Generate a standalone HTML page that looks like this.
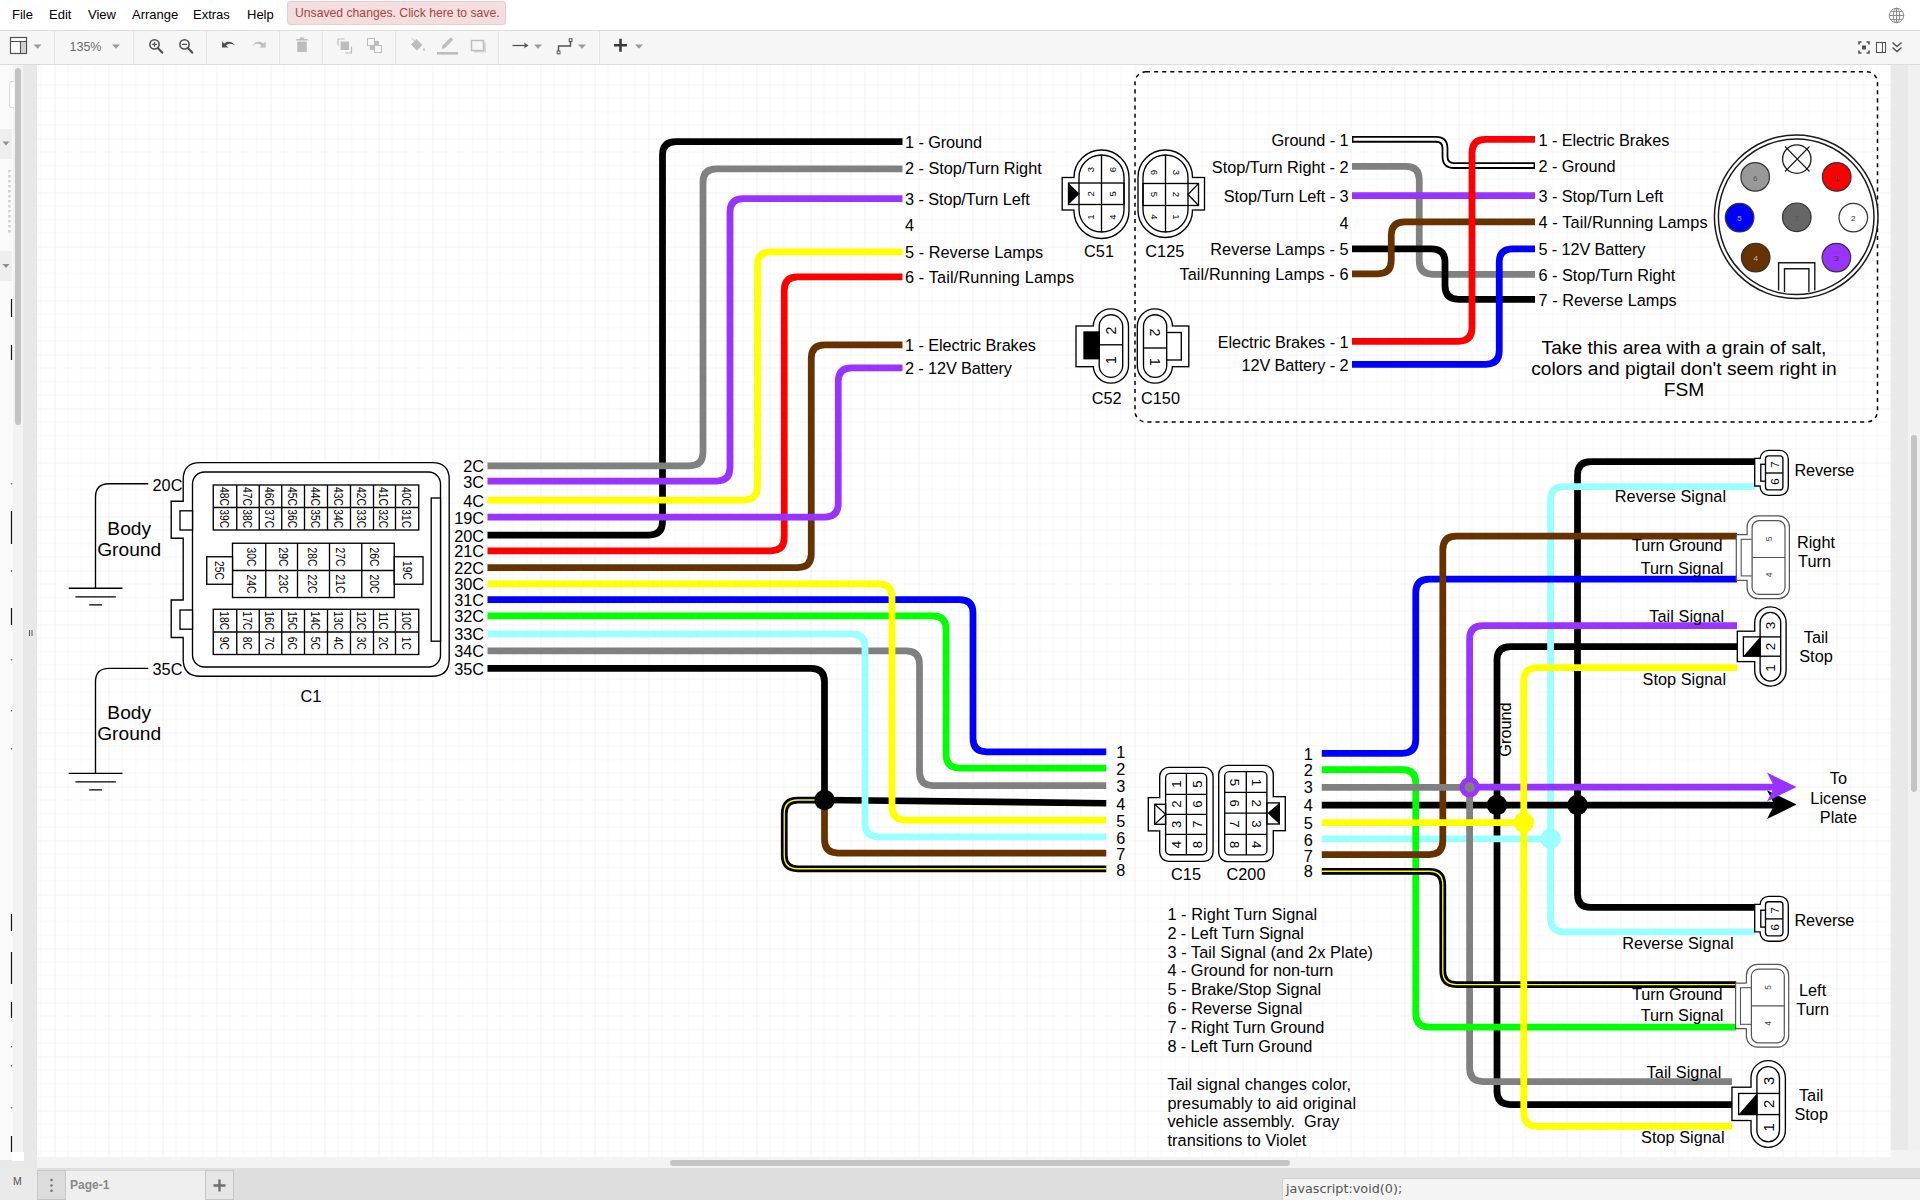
<!DOCTYPE html>
<html lang="en">
<head>
<meta charset="utf-8">
<title>Wiring diagram</title>
<style>
html,body{margin:0;padding:0;}
body{width:1920px;height:1200px;overflow:hidden;background:#fff;position:relative;font-family:"Liberation Sans",Arial,Helvetica,sans-serif;}
#dia{position:absolute;left:0;top:0;width:1920px;height:1200px;}
#dia text{font-family:"Liberation Sans",Arial,Helvetica,sans-serif;fill:#000;}
.abs{position:absolute;}
#menubar{left:0;top:0;width:1920px;height:30px;background:#fff;}
#menubar span.m{position:absolute;top:7px;font-size:13px;color:#000;line-height:15px;}
#unsaved{left:287px;top:1px;width:219px;height:24px;background:#f2dede;border:1px solid #ebccd1;border-radius:3px;box-sizing:border-box;color:#a94442;font-size:12.2px;line-height:23px;padding-left:7px;white-space:nowrap;}
#toolbar{left:0;top:30px;width:1920px;height:35px;background:#f6f6f6;border-top:1px solid #dcdcdc;border-bottom:1px solid #dcdcdc;box-sizing:border-box;}
.sep{position:absolute;top:31px;width:1px;height:33px;background:#e4e4e4;}
#leftbar{left:0;top:65px;width:37px;height:1103px;background:#e8e8e8;}
#rightbar{left:1891px;top:65px;width:29px;height:1103px;background:#e9e9e9;}
#hscroll{left:37px;top:1157px;width:1854px;height:11px;background:#f3f3f3;}
#footer{left:0;top:1168px;width:1920px;height:32px;background:#dedede;}
</style>
</head>
<body>
<svg id="dia" width="1920" height="1200" viewBox="0 0 1920 1200">
<defs>
<pattern id="grid" x="0.5" y="30.5" width="54" height="54" patternUnits="userSpaceOnUse">
<path d="M13.5 0V54M27 0V54M40.5 0V54M0 13.5H54M0 27H54M0 40.5H54" stroke="#f7f7f7" stroke-width="1" fill="none"/>
<path d="M0 0V54M0 0H54" stroke="#e7e7e7" stroke-width="1" fill="none"/>
</pattern>
</defs>
<rect x="0" y="0" width="1920" height="1200" fill="#ffffff"/>
<rect x="37" y="65" width="1854" height="1093" fill="url(#grid)"/>

<g id="c1">
<path d="M200.2 462.6 H432.2 Q449.2 462.6 449.2 479.6 V659.2 Q449.2 676.2 432.2 676.2 H200.2 Q183.2 676.2 183.2 659.2 V637.5 H171.2 V600 H183.2 V538.2 H171.2 V501.2 H183.2 V479.6 Q183.2 462.6 200.2 462.6 Z" fill="#fff" stroke="#000" stroke-width="1.35"/>
<rect x="192.5" y="472" width="248" height="195" rx="12" fill="#fff" stroke="#000" stroke-width="1.35" />
<rect x="180" y="510.8" width="12.5" height="19.2" rx="0" fill="#fff" stroke="#000" stroke-width="1.35" />
<rect x="180" y="610" width="12.5" height="19.2" rx="0" fill="#fff" stroke="#000" stroke-width="1.35" />
<rect x="431.2" y="498" width="9.3" height="143.2" rx="0" fill="#fff" stroke="#000" stroke-width="1.35" />
<rect x="213.25" y="485" width="205.5" height="45" rx="0" fill="#fff" stroke="#000" stroke-width="1.35" />
<line x1="213.25" y1="507.5" x2="418.75" y2="507.5" stroke="#000" stroke-width="1.35"/>
<line x1="236.75" y1="485" x2="236.75" y2="530" stroke="#000" stroke-width="1.35"/>
<line x1="259.25" y1="485" x2="259.25" y2="530" stroke="#000" stroke-width="1.35"/>
<line x1="281.75" y1="485" x2="281.75" y2="530" stroke="#000" stroke-width="1.35"/>
<line x1="304.5" y1="485" x2="304.5" y2="530" stroke="#000" stroke-width="1.35"/>
<line x1="327.5" y1="485" x2="327.5" y2="530" stroke="#000" stroke-width="1.35"/>
<line x1="350.5" y1="485" x2="350.5" y2="530" stroke="#000" stroke-width="1.35"/>
<line x1="373.5" y1="485" x2="373.5" y2="530" stroke="#000" stroke-width="1.35"/>
<line x1="395.5" y1="485" x2="395.5" y2="530" stroke="#000" stroke-width="1.35"/>
<rect x="213.25" y="609.25" width="205.5" height="45.25" rx="0" fill="#fff" stroke="#000" stroke-width="1.35" />
<line x1="213.25" y1="632" x2="418.75" y2="632" stroke="#000" stroke-width="1.35"/>
<line x1="236.75" y1="609.25" x2="236.75" y2="654.5" stroke="#000" stroke-width="1.35"/>
<line x1="259.25" y1="609.25" x2="259.25" y2="654.5" stroke="#000" stroke-width="1.35"/>
<line x1="281.75" y1="609.25" x2="281.75" y2="654.5" stroke="#000" stroke-width="1.35"/>
<line x1="304.5" y1="609.25" x2="304.5" y2="654.5" stroke="#000" stroke-width="1.35"/>
<line x1="327.5" y1="609.25" x2="327.5" y2="654.5" stroke="#000" stroke-width="1.35"/>
<line x1="350.5" y1="609.25" x2="350.5" y2="654.5" stroke="#000" stroke-width="1.35"/>
<line x1="373.5" y1="609.25" x2="373.5" y2="654.5" stroke="#000" stroke-width="1.35"/>
<line x1="395.5" y1="609.25" x2="395.5" y2="654.5" stroke="#000" stroke-width="1.35"/>
<rect x="232.5" y="543.25" width="161.75" height="54.25" rx="0" fill="#fff" stroke="#000" stroke-width="1.35" />
<line x1="232.5" y1="570.5" x2="394.25" y2="570.5" stroke="#000" stroke-width="1.35"/>
<line x1="265.75" y1="543.25" x2="265.75" y2="597.5" stroke="#000" stroke-width="1.35"/>
<line x1="297.5" y1="543.25" x2="297.5" y2="597.5" stroke="#000" stroke-width="1.35"/>
<line x1="329.5" y1="543.25" x2="329.5" y2="597.5" stroke="#000" stroke-width="1.35"/>
<line x1="361.75" y1="543.25" x2="361.75" y2="597.5" stroke="#000" stroke-width="1.35"/>
<rect x="206.75" y="556.75" width="25.75" height="27.5" rx="0" fill="#fff" stroke="#000" stroke-width="1.35" />
<rect x="394.25" y="556.75" width="28.75" height="27.5" rx="0" fill="#fff" stroke="#000" stroke-width="1.35" />
<text transform="translate(224.5 496.4) rotate(90) scale(1 1.28)" x="0" y="3.71" font-size="10.3" text-anchor="middle" >48C</text>
<text transform="translate(224.5 518.8) rotate(90) scale(1 1.28)" x="0" y="3.71" font-size="10.3" text-anchor="middle" >39C</text>
<text transform="translate(224.5 620.7) rotate(90) scale(1 1.28)" x="0" y="3.71" font-size="10.3" text-anchor="middle" >18C</text>
<text transform="translate(224.5 643.3) rotate(90) scale(1 1.28)" x="0" y="3.71" font-size="10.3" text-anchor="middle" >9C</text>
<text transform="translate(247.5 496.4) rotate(90) scale(1 1.28)" x="0" y="3.71" font-size="10.3" text-anchor="middle" >47C</text>
<text transform="translate(247.5 518.8) rotate(90) scale(1 1.28)" x="0" y="3.71" font-size="10.3" text-anchor="middle" >38C</text>
<text transform="translate(247.5 620.7) rotate(90) scale(1 1.28)" x="0" y="3.71" font-size="10.3" text-anchor="middle" >17C</text>
<text transform="translate(247.5 643.3) rotate(90) scale(1 1.28)" x="0" y="3.71" font-size="10.3" text-anchor="middle" >8C</text>
<text transform="translate(270 496.4) rotate(90) scale(1 1.28)" x="0" y="3.71" font-size="10.3" text-anchor="middle" >46C</text>
<text transform="translate(270 518.8) rotate(90) scale(1 1.28)" x="0" y="3.71" font-size="10.3" text-anchor="middle" >37C</text>
<text transform="translate(270 620.7) rotate(90) scale(1 1.28)" x="0" y="3.71" font-size="10.3" text-anchor="middle" >16C</text>
<text transform="translate(270 643.3) rotate(90) scale(1 1.28)" x="0" y="3.71" font-size="10.3" text-anchor="middle" >7C</text>
<text transform="translate(292.62 496.4) rotate(90) scale(1 1.28)" x="0" y="3.71" font-size="10.3" text-anchor="middle" >45C</text>
<text transform="translate(292.62 518.8) rotate(90) scale(1 1.28)" x="0" y="3.71" font-size="10.3" text-anchor="middle" >36C</text>
<text transform="translate(292.62 620.7) rotate(90) scale(1 1.28)" x="0" y="3.71" font-size="10.3" text-anchor="middle" >15C</text>
<text transform="translate(292.62 643.3) rotate(90) scale(1 1.28)" x="0" y="3.71" font-size="10.3" text-anchor="middle" >6C</text>
<text transform="translate(315.5 496.4) rotate(90) scale(1 1.28)" x="0" y="3.71" font-size="10.3" text-anchor="middle" >44C</text>
<text transform="translate(315.5 518.8) rotate(90) scale(1 1.28)" x="0" y="3.71" font-size="10.3" text-anchor="middle" >35C</text>
<text transform="translate(315.5 620.7) rotate(90) scale(1 1.28)" x="0" y="3.71" font-size="10.3" text-anchor="middle" >14C</text>
<text transform="translate(315.5 643.3) rotate(90) scale(1 1.28)" x="0" y="3.71" font-size="10.3" text-anchor="middle" >5C</text>
<text transform="translate(338.5 496.4) rotate(90) scale(1 1.28)" x="0" y="3.71" font-size="10.3" text-anchor="middle" >43C</text>
<text transform="translate(338.5 518.8) rotate(90) scale(1 1.28)" x="0" y="3.71" font-size="10.3" text-anchor="middle" >34C</text>
<text transform="translate(338.5 620.7) rotate(90) scale(1 1.28)" x="0" y="3.71" font-size="10.3" text-anchor="middle" >13C</text>
<text transform="translate(338.5 643.3) rotate(90) scale(1 1.28)" x="0" y="3.71" font-size="10.3" text-anchor="middle" >4C</text>
<text transform="translate(361.5 496.4) rotate(90) scale(1 1.28)" x="0" y="3.71" font-size="10.3" text-anchor="middle" >42C</text>
<text transform="translate(361.5 518.8) rotate(90) scale(1 1.28)" x="0" y="3.71" font-size="10.3" text-anchor="middle" >33C</text>
<text transform="translate(361.5 620.7) rotate(90) scale(1 1.28)" x="0" y="3.71" font-size="10.3" text-anchor="middle" >12C</text>
<text transform="translate(361.5 643.3) rotate(90) scale(1 1.28)" x="0" y="3.71" font-size="10.3" text-anchor="middle" >3C</text>
<text transform="translate(384 496.4) rotate(90) scale(1 1.28)" x="0" y="3.71" font-size="10.3" text-anchor="middle" >41C</text>
<text transform="translate(384 518.8) rotate(90) scale(1 1.28)" x="0" y="3.71" font-size="10.3" text-anchor="middle" >32C</text>
<text transform="translate(384 620.7) rotate(90) scale(1 1.28)" x="0" y="3.71" font-size="10.3" text-anchor="middle" >11C</text>
<text transform="translate(384 643.3) rotate(90) scale(1 1.28)" x="0" y="3.71" font-size="10.3" text-anchor="middle" >2C</text>
<text transform="translate(406.62 496.4) rotate(90) scale(1 1.28)" x="0" y="3.71" font-size="10.3" text-anchor="middle" >40C</text>
<text transform="translate(406.62 518.8) rotate(90) scale(1 1.28)" x="0" y="3.71" font-size="10.3" text-anchor="middle" >31C</text>
<text transform="translate(406.62 620.7) rotate(90) scale(1 1.28)" x="0" y="3.71" font-size="10.3" text-anchor="middle" >10C</text>
<text transform="translate(406.62 643.3) rotate(90) scale(1 1.28)" x="0" y="3.71" font-size="10.3" text-anchor="middle" >1C</text>
<text transform="translate(252.2 557) rotate(90) scale(1 1.28)" x="0" y="3.71" font-size="10.3" text-anchor="middle" >30C</text>
<text transform="translate(252.2 584) rotate(90) scale(1 1.28)" x="0" y="3.71" font-size="10.3" text-anchor="middle" >24C</text>
<text transform="translate(283.7 557) rotate(90) scale(1 1.28)" x="0" y="3.71" font-size="10.3" text-anchor="middle" >29C</text>
<text transform="translate(283.7 584) rotate(90) scale(1 1.28)" x="0" y="3.71" font-size="10.3" text-anchor="middle" >23C</text>
<text transform="translate(312.5 557) rotate(90) scale(1 1.28)" x="0" y="3.71" font-size="10.3" text-anchor="middle" >28C</text>
<text transform="translate(312.5 584) rotate(90) scale(1 1.28)" x="0" y="3.71" font-size="10.3" text-anchor="middle" >22C</text>
<text transform="translate(340.8 557) rotate(90) scale(1 1.28)" x="0" y="3.71" font-size="10.3" text-anchor="middle" >27C</text>
<text transform="translate(340.8 584) rotate(90) scale(1 1.28)" x="0" y="3.71" font-size="10.3" text-anchor="middle" >21C</text>
<text transform="translate(375 557) rotate(90) scale(1 1.28)" x="0" y="3.71" font-size="10.3" text-anchor="middle" >26C</text>
<text transform="translate(375 584) rotate(90) scale(1 1.28)" x="0" y="3.71" font-size="10.3" text-anchor="middle" >20C</text>
<text transform="translate(219.5 570.5) rotate(90) scale(1 1.28)" x="0" y="3.71" font-size="10.3" text-anchor="middle" >25C</text>
<text transform="translate(408 570.5) rotate(90) scale(1 1.28)" x="0" y="3.71" font-size="10.3" text-anchor="middle" >19C</text>
<text x="310.8" y="702.1" font-size="16.3" text-anchor="middle" >C1</text>
</g>
<g id="grounds" fill="none" stroke="#000" stroke-width="1.35">
<path d="M148.3 483.75 L109 483.75 Q95.5 483.75 95.5 497.25 L95.5 588.25"/>
<path d="M68.7 588.25 H122.5 M75.4 596.85 H115.8 M89.2 604.85 H101.9"/>
<path d="M148.3 668.3 L109 668.3 Q95.5 668.3 95.5 681.8 L95.5 773.3"/>
<path d="M68.7 773.3 H122.5 M75.4 781.9 H115.8 M89.2 789.9 H101.9"/>
</g>
<text x="182.4" y="490.8" font-size="16.3" text-anchor="end" >20C</text>
<text x="182.4" y="675" font-size="16.3" text-anchor="end" >35C</text>
<text x="129.2" y="534.5" font-size="19.2" text-anchor="middle" >Body</text>
<text x="129.2" y="555.5" font-size="19.2" text-anchor="middle" >Ground</text>
<text x="129.2" y="719.3" font-size="19.2" text-anchor="middle" >Body</text>
<text x="129.2" y="740.3" font-size="19.2" text-anchor="middle" >Ground</text>
<text x="484" y="472.35" font-size="16.3" text-anchor="end" >2C</text>
<text x="484" y="487.6" font-size="16.3" text-anchor="end" >3C</text>
<text x="484" y="506.6" font-size="16.3" text-anchor="end" >4C</text>
<text x="484" y="523.6" font-size="16.3" text-anchor="end" >19C</text>
<text x="484" y="541.6" font-size="16.3" text-anchor="end" >20C</text>
<text x="484" y="557.35" font-size="16.3" text-anchor="end" >21C</text>
<text x="484" y="574.1" font-size="16.3" text-anchor="end" >22C</text>
<text x="484" y="590.35" font-size="16.3" text-anchor="end" >30C</text>
<text x="484" y="606.1" font-size="16.3" text-anchor="end" >31C</text>
<text x="484" y="622.35" font-size="16.3" text-anchor="end" >32C</text>
<text x="484" y="640.35" font-size="16.3" text-anchor="end" >33C</text>
<text x="484" y="657.35" font-size="16.3" text-anchor="end" >34C</text>
<text x="484" y="674.85" font-size="16.3" text-anchor="end" >35C</text>
<g id="wiresA">
<path d="M487.5 535 L649 535 Q662.5 535 662.5 521.5 L662.5 155 Q662.5 141.5 676 141.5 L902.5 141.5" stroke="#000000" stroke-width="6.75" fill="none" />
<path d="M487.5 550.75 L770.75 550.75 Q784.25 550.75 784.25 537.25 L784.25 290.25 Q784.25 276.75 797.75 276.75 L902.5 276.75" stroke="#FF0000" stroke-width="6.75" fill="none" />
<path d="M487.5 567.5 L797.75 567.5 Q811.25 567.5 811.25 554 L811.25 358.25 Q811.25 344.75 824.75 344.75 L902.5 344.75" stroke="#663300" stroke-width="6.75" fill="none" />
<path d="M487.5 465.75 L689.5 465.75 Q703 465.75 703 452.25 L703 182.25 Q703 168.75 716.5 168.75 L902.5 168.75" stroke="#808080" stroke-width="6.75" fill="none" />
<path d="M487.5 481 L716.5 481 Q730 481 730 467.5 L730 212 Q730 198.5 743.5 198.5 L902.5 198.5" stroke="#9933FF" stroke-width="6.75" fill="none" />
<path d="M487.5 500 L744 500 Q757.5 500 757.5 486.5 L757.5 265.25 Q757.5 251.75 771 251.75 L902.5 251.75" stroke="#FFFF00" stroke-width="6.75" fill="none" />
<path d="M487.5 517 L824.75 517 Q838.25 517 838.25 503.5 L838.25 381.25 Q838.25 367.75 851.75 367.75 L902.5 367.75" stroke="#9933FF" stroke-width="6.75" fill="none" />
</g>
<text x="905" y="148" font-size="16.3" text-anchor="start"  textLength="77">1 - Ground</text>
<text x="905" y="173.5" font-size="16.3" text-anchor="start"  textLength="136.7">2 - Stop/Turn Right</text>
<text x="905" y="205.4" font-size="16.3" text-anchor="start"  textLength="124.7">3 - Stop/Turn Left</text>
<text x="905" y="230.8" font-size="16.3" text-anchor="start" >4</text>
<text x="905" y="257.55" font-size="16.3" text-anchor="start"  textLength="138.2">5 - Reverse Lamps</text>
<text x="905" y="282.9" font-size="16.3" text-anchor="start"  textLength="169.1">6 - Tail/Running Lamps</text>
<text x="905" y="351.35" font-size="16.3" text-anchor="start"  textLength="130.8">1 - Electric Brakes</text>
<text x="905" y="374.35" font-size="16.3" text-anchor="start"  textLength="107">2 - 12V Battery</text>
<g id="wiresB">
<path d="M487.5 668.25 L811 668.25 Q824.5 668.25 824.5 681.75 L824.5 800" stroke="#000000" stroke-width="6.75" fill="none" />
<path d="M824.5 800 L1106.25 803.25" stroke="#000000" stroke-width="6.75" fill="none" />
<path d="M824.5 800 L824.5 839.5 Q824.5 853 838 853 L1106.25 853" stroke="#663300" stroke-width="6.75" fill="none" />
<path d="M824.5 800 L797.75 800 Q784.25 800 784.25 813.5 L784.25 855.25 Q784.25 868.75 797.75 868.75 L1106.25 868.75" stroke="#000000" stroke-width="6.75" fill="none" />
<path d="M824.5 800 L797.75 800 Q784.25 800 784.25 813.5 L784.25 855.25 Q784.25 868.75 797.75 868.75 L1106.25 868.75" stroke="#FFFF00" stroke-width="1.35" fill="none" />
<circle cx="824.5" cy="800" r="10.2" fill="#000000" stroke="none" stroke-width="0"/>
<path d="M487.5 650.75 L906 650.75 Q919.5 650.75 919.5 664.25 L919.5 772 Q919.5 785.5 933 785.5 L1106.25 785.5" stroke="#808080" stroke-width="6.75" fill="none" />
<path d="M487.5 633.75 L851.5 633.75 Q865 633.75 865 647.25 L865 823.25 Q865 836.75 878.5 836.75 L1106.25 836.75" stroke="#99FFFF" stroke-width="6.75" fill="none" />
<path d="M487.5 615.75 L932.6 615.75 Q946.1 615.75 946.1 629.25 L946.1 754.5 Q946.1 768 959.6 768 L1106.25 768" stroke="#00FF00" stroke-width="6.75" fill="none" />
<path d="M487.5 599.5 L959.5 599.5 Q973 599.5 973 613 L973 738.25 Q973 751.75 986.5 751.75 L1106.25 751.75" stroke="#0000FF" stroke-width="6.75" fill="none" />
<path d="M487.5 583.75 L878.5 583.75 Q892 583.75 892 597.25 L892 806.5 Q892 820 905.5 820 L1106.25 820" stroke="#FFFF00" stroke-width="6.75" fill="none" />
</g>
<text x="1116.3" y="758.1" font-size="16.3" text-anchor="start" >1</text>
<text x="1116.3" y="775.1" font-size="16.3" text-anchor="start" >2</text>
<text x="1116.3" y="792.3" font-size="16.3" text-anchor="start" >3</text>
<text x="1116.3" y="810" font-size="16.3" text-anchor="start" >4</text>
<text x="1116.3" y="826.8" font-size="16.3" text-anchor="start" >5</text>
<text x="1116.3" y="843.6" font-size="16.3" text-anchor="start" >6</text>
<text x="1116.3" y="860.4" font-size="16.3" text-anchor="start" >7</text>
<text x="1116.3" y="876" font-size="16.3" text-anchor="start" >8</text>
<rect x="1135" y="71.7" width="742.5" height="350.3" rx="11" fill="none" stroke="#000" stroke-width="1.5" stroke-dasharray="4.05 4.05"/>
<g id="wiresC">
<path d="M1352 139.25 L1436 139.25 Q1445 139.25 1445 148.25 L1445 156.5 Q1445 165.5 1454 165.5 L1535 165.5" stroke="#000000" stroke-width="6.75" fill="none" />
<path d="M1353.4 139.25 L1436 139.25 Q1445 139.25 1445 148.25 L1445 156.5 Q1445 165.5 1454 165.5 L1533.6 165.5" stroke="#fff" stroke-width="3.2" fill="none" />
<path d="M1352 166.25 L1405.75 166.25 Q1419.25 166.25 1419.25 179.75 L1419.25 260.75 Q1419.25 274.25 1432.75 274.25 L1535 274.25" stroke="#808080" stroke-width="6.75" fill="none" />
<path d="M1352 195.5 L1535 195.5" stroke="#9933FF" stroke-width="6.75" fill="none" />
<path d="M1352 248.75 L1431.5 248.75 Q1445 248.75 1445 262.25 L1445 285.75 Q1445 299.25 1458.5 299.25 L1535 299.25" stroke="#000000" stroke-width="6.75" fill="none" />
<path d="M1352 273.75 L1377.75 273.75 Q1391.25 273.75 1391.25 260.25 L1391.25 235.25 Q1391.25 221.75 1404.75 221.75 L1535 221.75" stroke="#663300" stroke-width="6.75" fill="none" />
<path d="M1352 341.25 L1458.5 341.25 Q1472 341.25 1472 327.75 L1472 152.75 Q1472 139.25 1485.5 139.25 L1535 139.25" stroke="#FF0000" stroke-width="6.75" fill="none" />
<path d="M1352 364.25 L1485.75 364.25 Q1499.25 364.25 1499.25 350.75 L1499.25 262.25 Q1499.25 248.75 1512.75 248.75 L1535 248.75" stroke="#0000FF" stroke-width="6.75" fill="none" />
</g>
<text x="1348.5" y="145.85" font-size="16.3" text-anchor="end"  textLength="77">Ground - 1</text>
<text x="1348.5" y="172.85" font-size="16.3" text-anchor="end"  textLength="136.7">Stop/Turn Right - 2</text>
<text x="1348.5" y="202.1" font-size="16.3" text-anchor="end"  textLength="124.7">Stop/Turn Left - 3</text>
<text x="1348.5" y="228.6" font-size="16.3" text-anchor="end" >4</text>
<text x="1348.5" y="255.35" font-size="16.3" text-anchor="end"  textLength="138.2">Reverse Lamps - 5</text>
<text x="1348.5" y="280.35" font-size="16.3" text-anchor="end"  textLength="169.1">Tail/Running Lamps - 6</text>
<text x="1348.5" y="347.85" font-size="16.3" text-anchor="end"  textLength="130.8">Electric Brakes - 1</text>
<text x="1348.5" y="370.85" font-size="16.3" text-anchor="end"  textLength="107">12V Battery - 2</text>
<text x="1538.5" y="145.85" font-size="16.3" text-anchor="start"  textLength="130.8">1 - Electric Brakes</text>
<text x="1538.5" y="172.1" font-size="16.3" text-anchor="start"  textLength="77">2 - Ground</text>
<text x="1538.5" y="202.1" font-size="16.3" text-anchor="start"  textLength="124.7">3 - Stop/Turn Left</text>
<text x="1538.5" y="228.35" font-size="16.3" text-anchor="start"  textLength="169.1">4 - Tail/Running Lamps</text>
<text x="1538.5" y="255.35" font-size="16.3" text-anchor="start"  textLength="107">5 - 12V Battery</text>
<text x="1538.5" y="280.85" font-size="16.3" text-anchor="start"  textLength="136.7">6 - Stop/Turn Right</text>
<text x="1538.5" y="305.85" font-size="16.3" text-anchor="start"  textLength="138.2">7 - Reverse Lamps</text>
<text x="1684" y="353.6" font-size="19.2" text-anchor="middle" >Take this area with a grain of salt,</text>
<text x="1684" y="374.6" font-size="19.2" text-anchor="middle" >colors and pigtail don't seem right in</text>
<text x="1684" y="395.6" font-size="19.2" text-anchor="middle" >FSM</text>
<g id="round">
<circle cx="1796.2" cy="216.8" r="81.8" fill="#fff" stroke="#1a1a1a" stroke-width="1.5"/>
<circle cx="1796.2" cy="216.8" r="77.8" fill="#fff" stroke="#1a1a1a" stroke-width="1.5"/>
<circle cx="1796.8" cy="159.1" r="14.2" fill="#fff" stroke="#1a1a1a" stroke-width="1.3"/>
<path d="M1785 146.5 L1809.5 171.5 M1809.5 146.5 L1785 171.5" stroke="#1a1a1a" stroke-width="1.1" fill="none"/>
<circle cx="1836.75" cy="176.9" r="14.3" fill="#FF0000" stroke="#333" stroke-width="1.2"/>
<text x="1836.75" y="180.6" font-size="8" text-anchor="middle" style="fill:#333">1</text>
<circle cx="1853.3" cy="217.6" r="14.3" fill="#FFFFFF" stroke="#333" stroke-width="1.2"/>
<text x="1853.3" y="221.3" font-size="8" text-anchor="middle" style="fill:#333">2</text>
<circle cx="1836.4" cy="257.6" r="14.3" fill="#9933FF" stroke="#333" stroke-width="1.2"/>
<text x="1836.4" y="261.3" font-size="8" text-anchor="middle" style="fill:#333">3</text>
<circle cx="1755.7" cy="257.6" r="14.3" fill="#663300" stroke="#333" stroke-width="1.2"/>
<text x="1755.7" y="261.3" font-size="8" text-anchor="middle" style="fill:#bbb">4</text>
<circle cx="1739.6" cy="217.6" r="14.3" fill="#0000FF" stroke="#333" stroke-width="1.2"/>
<text x="1739.6" y="221.3" font-size="8" text-anchor="middle" style="fill:#bbb">5</text>
<circle cx="1755.2" cy="176.9" r="14.3" fill="#999999" stroke="#333" stroke-width="1.2"/>
<text x="1755.2" y="180.6" font-size="8" text-anchor="middle" style="fill:#555">6</text>
<circle cx="1796.8" cy="217.3" r="14.3" fill="#666666" stroke="#333" stroke-width="1.2"/>
<text x="1796.8" y="221" font-size="8" text-anchor="middle" style="fill:#555">7</text>
<path d="M1778.6 290.5 V262.7 H1814.8 V290.5 M1784.5 292 V268.8 H1808.9 V292" stroke="#1a1a1a" stroke-width="1.4" fill="none"/>
</g>
<g id="c51">
<rect x="1062.2" y="177.5" width="27.8" height="32.5" rx="0" fill="#fff" stroke="#000" stroke-width="1.35" />
<rect x="1074" y="150" width="55" height="88.5" rx="27.5" fill="#fff" stroke="#000" stroke-width="1.35" />
<rect x="1072.5" y="178.2" width="4" height="31.1" fill="#fff"/>
<rect x="1079" y="155" width="45" height="77" rx="22.5" fill="#fff" stroke="#000" stroke-width="1.35" />
<line x1="1101.5" y1="155" x2="1101.5" y2="232" stroke="#000" stroke-width="1.35"/>
<rect x="1068.5" y="183" width="55.5" height="21.5" rx="0" fill="none" stroke="#000" stroke-width="1.35" />
<path d="M1068.5 183 L1079.5 193.75 L1068.5 204.5 Z" fill="#000"/>
<text transform="translate(1090.5 169.5) rotate(-90)" x="0" y="3.42" font-size="9.5" text-anchor="middle" >3</text>
<text transform="translate(1112.5 169.5) rotate(-90)" x="0" y="3.42" font-size="9.5" text-anchor="middle" >6</text>
<text transform="translate(1090.5 193.75) rotate(-90)" x="0" y="3.42" font-size="9.5" text-anchor="middle" >2</text>
<text transform="translate(1112.5 193.75) rotate(-90)" x="0" y="3.42" font-size="9.5" text-anchor="middle" >5</text>
<text transform="translate(1090.5 217) rotate(-90)" x="0" y="3.42" font-size="9.5" text-anchor="middle" >1</text>
<text transform="translate(1112.5 217) rotate(-90)" x="0" y="3.42" font-size="9.5" text-anchor="middle" >4</text>
</g>
<text x="1099" y="257.3" font-size="16.3" text-anchor="middle" >C51</text>
<g id="c125">
<rect x="1176" y="177.5" width="28.5" height="32.5" rx="0" fill="#fff" stroke="#000" stroke-width="1.35" />
<rect x="1138" y="150" width="54.5" height="87.5" rx="27.25" fill="#fff" stroke="#000" stroke-width="1.35" />
<rect x="1190.5" y="178.2" width="4" height="31.1" fill="#fff"/>
<rect x="1143" y="155" width="45" height="77" rx="22.5" fill="#fff" stroke="#000" stroke-width="1.35" />
<line x1="1165.5" y1="155" x2="1165.5" y2="232" stroke="#000" stroke-width="1.35"/>
<rect x="1143" y="183.5" width="55.5" height="22" rx="0" fill="none" stroke="#000" stroke-width="1.35" />
<path d="M1198.5 183.5 L1188 194.5 L1198.5 205.5" fill="none" stroke="#000" stroke-width="1.2"/>
<text transform="translate(1154.5 172.5) rotate(90)" x="0" y="3.42" font-size="9.5" text-anchor="middle" >6</text>
<text transform="translate(1176.5 172.5) rotate(90)" x="0" y="3.42" font-size="9.5" text-anchor="middle" >3</text>
<text transform="translate(1154.5 194.5) rotate(90)" x="0" y="3.42" font-size="9.5" text-anchor="middle" >5</text>
<text transform="translate(1176.5 194.5) rotate(90)" x="0" y="3.42" font-size="9.5" text-anchor="middle" >2</text>
<text transform="translate(1154.5 217) rotate(90)" x="0" y="3.42" font-size="9.5" text-anchor="middle" >4</text>
<text transform="translate(1176.5 217) rotate(90)" x="0" y="3.42" font-size="9.5" text-anchor="middle" >1</text>
</g>
<text x="1164.8" y="257.3" font-size="16.3" text-anchor="middle" >C125</text>
<g id="c52">
<rect x="1076" y="326" width="29" height="40.7" rx="0" fill="#fff" stroke="#000" stroke-width="1.35" />
<rect x="1093.3" y="308.8" width="35.2" height="74.4" rx="17.6" fill="#fff" stroke="#000" stroke-width="1.35" />
<rect x="1091.5" y="326.7" width="4" height="39.3" fill="#fff"/>
<rect x="1099.2" y="314.7" width="23.5" height="62.6" rx="11.75" fill="#fff" stroke="#000" stroke-width="1.35" />
<rect x="1084" y="332" width="15.2" height="26.7" rx="0" fill="#000" stroke="#000" stroke-width="1.35" />
<line x1="1099.2" y1="344.8" x2="1122.7" y2="344.8" stroke="#000" stroke-width="1.35"/>
<text transform="translate(1111 330.5) rotate(-90)" x="0" y="5.04" font-size="14" text-anchor="middle" >2</text>
<text transform="translate(1111 360) rotate(-90)" x="0" y="5.04" font-size="14" text-anchor="middle" >1</text>
</g>
<text x="1106.7" y="403.5" font-size="16.3" text-anchor="middle" >C52</text>
<g id="c150">
<rect x="1160" y="326" width="28.8" height="40.7" rx="0" fill="#fff" stroke="#000" stroke-width="1.35" />
<rect x="1137.3" y="308.8" width="35.2" height="74.4" rx="17.6" fill="#fff" stroke="#000" stroke-width="1.35" />
<rect x="1170.5" y="326.7" width="4" height="39.3" fill="#fff"/>
<rect x="1143.5" y="314.7" width="23.2" height="62.6" rx="11.6" fill="#fff" stroke="#000" stroke-width="1.35" />
<rect x="1166.7" y="332.5" width="14.6" height="27.5" rx="0" fill="#fff" stroke="#000" stroke-width="1.35" />
<line x1="1143.5" y1="348" x2="1166.7" y2="348" stroke="#000" stroke-width="1.35"/>
<text transform="translate(1155 332.5) rotate(90)" x="0" y="5.04" font-size="14" text-anchor="middle" >2</text>
<text transform="translate(1155 362) rotate(90)" x="0" y="5.04" font-size="14" text-anchor="middle" >1</text>
</g>
<text x="1160.5" y="403.5" font-size="16.3" text-anchor="middle" >C150</text>
<g id="c15">
<rect x="1148.3" y="797.6" width="26.7" height="33.3" rx="0" fill="#fff" stroke="#000" stroke-width="1.35" />
<rect x="1159.7" y="767.3" width="53.4" height="94" rx="9" fill="#fff" stroke="#000" stroke-width="1.35" />
<rect x="1158" y="798.3" width="4" height="31.9" fill="#fff"/>
<rect x="1165.6" y="773.3" width="41.1" height="81.4" rx="4.5" fill="#fff" stroke="#000" stroke-width="1.35" />
<line x1="1186.4" y1="773.3" x2="1186.4" y2="854.7" stroke="#000" stroke-width="1.35"/>
<line x1="1165.6" y1="794.3" x2="1206.7" y2="794.3" stroke="#000" stroke-width="1.35"/>
<line x1="1165.6" y1="814.3" x2="1206.7" y2="814.3" stroke="#000" stroke-width="1.35"/>
<line x1="1165.6" y1="834.3" x2="1206.7" y2="834.3" stroke="#000" stroke-width="1.35"/>
<rect x="1154.7" y="804.3" width="10.9" height="20" rx="0" fill="none" stroke="#000" stroke-width="1.35" />
<path d="M1154.7 804.3 L1165.6 814.3 L1154.7 824.3" fill="none" stroke="#000" stroke-width="1.2"/>
<text transform="translate(1176 784) rotate(-90)" x="0" y="4.75" font-size="13.2" text-anchor="middle" >1</text>
<text transform="translate(1176 804.2) rotate(-90)" x="0" y="4.75" font-size="13.2" text-anchor="middle" >2</text>
<text transform="translate(1176 824.4) rotate(-90)" x="0" y="4.75" font-size="13.2" text-anchor="middle" >3</text>
<text transform="translate(1176 844.6) rotate(-90)" x="0" y="4.75" font-size="13.2" text-anchor="middle" >4</text>
<text transform="translate(1197 784) rotate(-90)" x="0" y="4.75" font-size="13.2" text-anchor="middle" >5</text>
<text transform="translate(1197 804.2) rotate(-90)" x="0" y="4.75" font-size="13.2" text-anchor="middle" >6</text>
<text transform="translate(1197 824.4) rotate(-90)" x="0" y="4.75" font-size="13.2" text-anchor="middle" >7</text>
<text transform="translate(1197 844.6) rotate(-90)" x="0" y="4.75" font-size="13.2" text-anchor="middle" >8</text>
</g>
<text x="1186" y="880.1" font-size="16.3" text-anchor="middle" >C15</text>
<g id="c200">
<rect x="1256" y="796.7" width="29.3" height="34" rx="0" fill="#fff" stroke="#000" stroke-width="1.35" />
<rect x="1218.7" y="765.3" width="54.6" height="96.3" rx="9" fill="#fff" stroke="#000" stroke-width="1.35" />
<rect x="1271.3" y="797.4" width="4" height="32.6" fill="#fff"/>
<rect x="1224.7" y="771.6" width="42.2" height="83.3" rx="4.5" fill="#fff" stroke="#000" stroke-width="1.35" />
<line x1="1246.3" y1="771.6" x2="1246.3" y2="854.9" stroke="#000" stroke-width="1.35"/>
<line x1="1224.7" y1="792.4" x2="1266.9" y2="792.4" stroke="#000" stroke-width="1.35"/>
<line x1="1224.7" y1="813.1" x2="1266.9" y2="813.1" stroke="#000" stroke-width="1.35"/>
<line x1="1224.7" y1="834.3" x2="1266.9" y2="834.3" stroke="#000" stroke-width="1.35"/>
<rect x="1266.9" y="802.9" width="12.4" height="21.1" rx="0" fill="none" stroke="#000" stroke-width="1.35" />
<path d="M1279.3 802.9 L1267.5 813.1 L1279.3 824 Z" fill="#000"/>
<text transform="translate(1235 782.5) rotate(90)" x="0" y="4.75" font-size="13.2" text-anchor="middle" >5</text>
<text transform="translate(1235 803.2) rotate(90)" x="0" y="4.75" font-size="13.2" text-anchor="middle" >6</text>
<text transform="translate(1235 823.9) rotate(90)" x="0" y="4.75" font-size="13.2" text-anchor="middle" >7</text>
<text transform="translate(1235 844.6) rotate(90)" x="0" y="4.75" font-size="13.2" text-anchor="middle" >8</text>
<text transform="translate(1257 782.5) rotate(90)" x="0" y="4.75" font-size="13.2" text-anchor="middle" >1</text>
<text transform="translate(1257 803.2) rotate(90)" x="0" y="4.75" font-size="13.2" text-anchor="middle" >2</text>
<text transform="translate(1257 823.9) rotate(90)" x="0" y="4.75" font-size="13.2" text-anchor="middle" >3</text>
<text transform="translate(1257 844.6) rotate(90)" x="0" y="4.75" font-size="13.2" text-anchor="middle" >4</text>
</g>
<text x="1246" y="880.1" font-size="16.3" text-anchor="middle" >C200</text>
<text x="1167.4" y="919.75" font-size="16.3" text-anchor="start" xml:space="preserve" textLength="149.8">1 - Right Turn Signal</text>
<text x="1167.4" y="938.62" font-size="16.3" text-anchor="start" xml:space="preserve" textLength="136.5">2 - Left Turn Signal</text>
<text x="1167.4" y="957.5" font-size="16.3" text-anchor="start" xml:space="preserve" textLength="205.6">3 - Tail Signal (and 2x Plate)</text>
<text x="1167.4" y="976.38" font-size="16.3" text-anchor="start" xml:space="preserve" textLength="166">4 - Ground for non-turn</text>
<text x="1167.4" y="995.25" font-size="16.3" text-anchor="start" xml:space="preserve" textLength="153.8">5 - Brake/Stop Signal</text>
<text x="1167.4" y="1014.12" font-size="16.3" text-anchor="start" xml:space="preserve" textLength="135">6 - Reverse Signal</text>
<text x="1167.4" y="1033" font-size="16.3" text-anchor="start" xml:space="preserve" textLength="156.9">7 - Right Turn Ground</text>
<text x="1167.4" y="1051.88" font-size="16.3" text-anchor="start" xml:space="preserve" textLength="144.8">8 - Left Turn Ground</text>
<text x="1167.4" y="1089.62" font-size="16.3" text-anchor="start" xml:space="preserve" textLength="183.6">Tail signal changes color,</text>
<text x="1167.4" y="1108.5" font-size="16.3" text-anchor="start" xml:space="preserve" textLength="188.6">presumably to aid original</text>
<text x="1167.4" y="1127.38" font-size="16.3" text-anchor="start" xml:space="preserve" textLength="172">vehicle assembly.  Gray</text>
<text x="1167.4" y="1146.25" font-size="16.3" text-anchor="start" xml:space="preserve" textLength="138.9">transitions to Violet</text>
<text x="1312.8" y="759.7" font-size="16.3" text-anchor="end" >1</text>
<text x="1312.8" y="775.9" font-size="16.3" text-anchor="end" >2</text>
<text x="1312.8" y="793.1" font-size="16.3" text-anchor="end" >3</text>
<text x="1312.8" y="811" font-size="16.3" text-anchor="end" >4</text>
<text x="1312.8" y="829" font-size="16.3" text-anchor="end" >5</text>
<text x="1312.8" y="845.7" font-size="16.3" text-anchor="end" >6</text>
<text x="1312.8" y="861.7" font-size="16.3" text-anchor="end" >7</text>
<text x="1312.8" y="877.1" font-size="16.3" text-anchor="end" >8</text>
<g id="wiresD">
<path d="M1497 805 L1497 660.2 Q1497 646.7 1510.5 646.7 L1737 646.7" stroke="#000000" stroke-width="6.75" fill="none" />
<path d="M1497 805 L1497 1091.1 Q1497 1104.6 1510.5 1104.6 L1732 1104.6" stroke="#000000" stroke-width="6.75" fill="none" />
<path d="M1577.5 805 L1577.5 475.2 Q1577.5 461.7 1591 461.7 L1755 461.7" stroke="#000000" stroke-width="6.75" fill="none" />
<path d="M1577.5 805 L1577.5 893.9 Q1577.5 907.4 1591 907.4 L1755 907.4" stroke="#000000" stroke-width="6.75" fill="none" />
<path d="M1321.75 838.75 L1550.6 838.75" stroke="#99FFFF" stroke-width="6.75" fill="none" />
<path d="M1550.6 838.75 L1550.6 500.1 Q1550.6 486.6 1564.1 486.6 L1755 486.6" stroke="#99FFFF" stroke-width="6.75" fill="none" />
<path d="M1550.6 838.75 L1550.6 918.3 Q1550.6 931.8 1564.1 931.8 L1755 931.8" stroke="#99FFFF" stroke-width="6.75" fill="none" />
<circle cx="1550.6" cy="838.75" r="10.2" fill="#99FFFF" stroke="none" stroke-width="0"/>
<path d="M1321.75 805 L1775 805" stroke="#000000" stroke-width="6.75" fill="none" />
<path d="M1796.6 804.6 L1767 819 L1774.4 804.6 L1767 790.2 Z" fill="#000"/>
<circle cx="1497" cy="805" r="10.2" fill="#000000" stroke="none" stroke-width="0"/>
<circle cx="1577.5" cy="805" r="10.2" fill="#000000" stroke="none" stroke-width="0"/>
<path d="M1469.6 787.25 L1469.6 1068.1 Q1469.6 1081.6 1483.1 1081.6 L1732 1081.6" stroke="#808080" stroke-width="6.75" fill="none" />
<path d="M1321.75 769.5 L1402.25 769.5 Q1415.75 769.5 1415.75 783 L1415.75 1013.6 Q1415.75 1027.1 1429.25 1027.1 L1736.2 1027.1" stroke="#00FF00" stroke-width="6.75" fill="none" />
<path d="M1321.75 753.25 L1402.25 753.25 Q1415.75 753.25 1415.75 739.75 L1415.75 592.5 Q1415.75 579 1429.25 579 L1737 579" stroke="#0000FF" stroke-width="6.75" fill="none" />
<path d="M1321.75 854.5 L1429.3 854.5 Q1442.8 854.5 1442.8 841 L1442.8 549.7 Q1442.8 536.2 1456.3 536.2 L1737 536.2" stroke="#663300" stroke-width="6.75" fill="none" />
<path d="M1321.75 787.25 L1469.6 787.25" stroke="#808080" stroke-width="6.75" fill="none" />
<path d="M1469.6 787.25 L1469.6 639 Q1469.6 625.5 1483.1 625.5 L1737 625.5" stroke="#9933FF" stroke-width="6.75" fill="none" />
<path d="M1469.6 787.1 L1775 787.1" stroke="#9933FF" stroke-width="6.75" fill="none" />
<path d="M1796.6 787 L1767 801.4 L1774.4 787 L1767 772.6 Z" fill="#9933FF"/>
<circle cx="1469.6" cy="787.25" r="7.6" fill="#808080" stroke="#9933FF" stroke-width="5.2"/>
<path d="M1321.75 871.25 L1429.3 871.25 Q1442.8 871.25 1442.8 884.75 L1442.8 971.1 Q1442.8 984.6 1456.3 984.6 L1736.2 984.6" stroke="#000000" stroke-width="6.75" fill="none" />
<path d="M1321.75 871.25 L1429.3 871.25 Q1442.8 871.25 1442.8 884.75 L1442.8 971.1 Q1442.8 984.6 1456.3 984.6 L1736.2 984.6" stroke="#FFFF00" stroke-width="1.35" fill="none" />
<path d="M1321.75 822.5 L1523.75 822.5" stroke="#FFFF00" stroke-width="6.75" fill="none" />
<path d="M1523.75 822.5 L1523.75 681 Q1523.75 667.5 1537.25 667.5 L1737 667.5" stroke="#FFFF00" stroke-width="6.75" fill="none" />
<path d="M1523.75 822.5 L1523.75 1112.8 Q1523.75 1126.3 1537.25 1126.3 L1732 1126.3" stroke="#FFFF00" stroke-width="6.75" fill="none" />
<circle cx="1523.75" cy="822.5" r="10.2" fill="#FFFF00" stroke="none" stroke-width="0"/>
</g>
<text transform="translate(1505 729.5) rotate(-90)" x="0" y="5.87" font-size="16.3" text-anchor="middle" >Ground</text>
<path d="M1760.1 458.4 H1754.7 V486 H1760.1" fill="#fff" stroke="#000" stroke-width="1.35"/>
<rect x="1760.1" y="450.4" width="28.2" height="44.9" rx="8.5" fill="#fff" stroke="#000" stroke-width="1.35" />
<rect x="1758.6" y="459.1" width="3" height="26.2" fill="#fff"/>
<rect x="1760.8" y="464.3" width="5.2" height="16.9" rx="0" fill="#fff" stroke="#000" stroke-width="1.35" />
<rect x="1765.5" y="455.8" width="17.4" height="34.1" rx="3" fill="#fff" stroke="#000" stroke-width="1.35" />
<line x1="1765.5" y1="473" x2="1782.9" y2="473" stroke="#000" stroke-width="1.35"/>
<text transform="translate(1774.4 464.5) rotate(-90)" x="0" y="4.14" font-size="11.5" text-anchor="middle" >7</text>
<text transform="translate(1774.4 481.5) rotate(-90)" x="0" y="4.14" font-size="11.5" text-anchor="middle" >6</text>
<path d="M1760.1 904.3 H1754.7 V931.9 H1760.1" fill="#fff" stroke="#000" stroke-width="1.35"/>
<rect x="1760.1" y="896.3" width="28.2" height="44.9" rx="8.5" fill="#fff" stroke="#000" stroke-width="1.35" />
<rect x="1758.6" y="905" width="3" height="26.2" fill="#fff"/>
<rect x="1760.8" y="910.2" width="5.2" height="16.9" rx="0" fill="#fff" stroke="#000" stroke-width="1.35" />
<rect x="1765.5" y="901.7" width="17.4" height="34.1" rx="3" fill="#fff" stroke="#000" stroke-width="1.35" />
<line x1="1765.5" y1="918.9" x2="1782.9" y2="918.9" stroke="#000" stroke-width="1.35"/>
<text transform="translate(1774.4 910.4) rotate(-90)" x="0" y="4.14" font-size="11.5" text-anchor="middle" >7</text>
<text transform="translate(1774.4 927.4) rotate(-90)" x="0" y="4.14" font-size="11.5" text-anchor="middle" >6</text>
<text x="1794.4" y="476.1" font-size="16.3" text-anchor="start"  textLength="60">Reverse</text>
<text x="1794.4" y="926" font-size="16.3" text-anchor="start"  textLength="60">Reverse</text>
<path d="M1747.1 534.7 H1736.3 V580.3 H1747.1" fill="#fff" stroke="#555" stroke-width="1.2"/>
<rect x="1747.1" y="515.9" width="42.3" height="82.8" rx="11" fill="#fff" stroke="#555" stroke-width="1.2" />
<rect x="1745.6" y="535.3" width="3" height="44.4" fill="#fff"/>
<rect x="1741.2" y="539.3" width="11.4" height="36.6" rx="0" fill="#fff" stroke="#555" stroke-width="1.1" />
<rect x="1752.1" y="520.7" width="32.9" height="73.7" rx="7" fill="#fff" stroke="#555" stroke-width="1.2" />
<line x1="1752.1" y1="557.5" x2="1785" y2="557.5" stroke="#555" stroke-width="1.1"/>
<text transform="translate(1768.6 539) rotate(-90)" x="0" y="3.06" font-size="8.5" text-anchor="middle" style="fill:#444">5</text>
<text transform="translate(1768.6 575) rotate(-90)" x="0" y="3.06" font-size="8.5" text-anchor="middle" style="fill:#444">4</text>
<path d="M1746.4 983.1 H1735.6 V1028.7 H1746.4" fill="#fff" stroke="#555" stroke-width="1.2"/>
<rect x="1746.4" y="964.3" width="42.3" height="82.8" rx="11" fill="#fff" stroke="#555" stroke-width="1.2" />
<rect x="1744.9" y="983.7" width="3" height="44.4" fill="#fff"/>
<rect x="1740.5" y="987.7" width="11.4" height="36.6" rx="0" fill="#fff" stroke="#555" stroke-width="1.1" />
<rect x="1751.4" y="969.1" width="32.9" height="73.7" rx="7" fill="#fff" stroke="#555" stroke-width="1.2" />
<line x1="1751.4" y1="1005.9" x2="1784.3" y2="1005.9" stroke="#555" stroke-width="1.1"/>
<text transform="translate(1767.9 987.4) rotate(-90)" x="0" y="3.06" font-size="8.5" text-anchor="middle" style="fill:#444">5</text>
<text transform="translate(1767.9 1023.4) rotate(-90)" x="0" y="3.06" font-size="8.5" text-anchor="middle" style="fill:#444">4</text>
<text x="1816" y="548.4" font-size="16.3" text-anchor="middle" >Right</text>
<text x="1814.5" y="567.4" font-size="16.3" text-anchor="middle" >Turn</text>
<text x="1812.6" y="996.2" font-size="16.3" text-anchor="middle" >Left</text>
<text x="1812.6" y="1015.2" font-size="16.3" text-anchor="middle" >Turn</text>
<rect x="1737.3" y="631.2" width="27.7" height="30.4" rx="0" fill="#fff" stroke="#000" stroke-width="1.35" />
<rect x="1754.7" y="606.9" width="31.4" height="79.2" rx="15.7" fill="#fff" stroke="#000" stroke-width="1.35" />
<rect x="1752.7" y="631.9" width="4" height="29" fill="#fff"/>
<rect x="1760.1" y="612.4" width="20.6" height="68.7" rx="10.3" fill="#fff" stroke="#000" stroke-width="1.35" />
<line x1="1760.1" y1="636.9" x2="1780.7" y2="636.9" stroke="#000" stroke-width="1.35"/>
<line x1="1760.1" y1="656.2" x2="1780.7" y2="656.2" stroke="#000" stroke-width="1.35"/>
<rect x="1743.4" y="636.9" width="16.7" height="19.3" rx="0" fill="#fff" stroke="#000" stroke-width="1.35" />
<path d="M1760.1 636.9 L1760.1 656.2 L1743.4 656.2 Z" fill="#000"/>
<text transform="translate(1770.6 625.5) rotate(-90)" x="0" y="4.86" font-size="13.5" text-anchor="middle" >3</text>
<text transform="translate(1770.6 646.5) rotate(-90)" x="0" y="4.86" font-size="13.5" text-anchor="middle" >2</text>
<text transform="translate(1770.6 668) rotate(-90)" x="0" y="4.86" font-size="13.5" text-anchor="middle" >1</text>
<rect x="1731.95" y="1087.21" width="30.33" height="33.29" rx="0" fill="#fff" stroke="#000" stroke-width="1.35" />
<rect x="1751" y="1060.6" width="34.38" height="86.72" rx="17.19" fill="#fff" stroke="#000" stroke-width="1.35" />
<rect x="1749" y="1087.91" width="4" height="31.89" fill="#fff"/>
<rect x="1756.91" y="1066.62" width="22.56" height="75.23" rx="11.28" fill="#fff" stroke="#000" stroke-width="1.35" />
<line x1="1756.91" y1="1093.45" x2="1779.47" y2="1093.45" stroke="#000" stroke-width="1.35"/>
<line x1="1756.91" y1="1114.58" x2="1779.47" y2="1114.58" stroke="#000" stroke-width="1.35"/>
<rect x="1738.63" y="1093.45" width="18.29" height="21.13" rx="0" fill="#fff" stroke="#000" stroke-width="1.35" />
<path d="M1756.91 1093.45 L1756.91 1114.58 L1738.63 1114.58 Z" fill="#000"/>
<text transform="translate(1768.41 1080.97) rotate(-90)" x="0" y="5.32" font-size="14.78" text-anchor="middle" >3</text>
<text transform="translate(1768.41 1103.96) rotate(-90)" x="0" y="5.32" font-size="14.78" text-anchor="middle" >2</text>
<text transform="translate(1768.41 1127.5) rotate(-90)" x="0" y="5.32" font-size="14.78" text-anchor="middle" >1</text>
<text x="1816" y="642.7" font-size="16.3" text-anchor="middle" >Tail</text>
<text x="1816" y="661.6" font-size="16.3" text-anchor="middle" >Stop</text>
<text x="1811.2" y="1101" font-size="16.3" text-anchor="middle" >Tail</text>
<text x="1811.2" y="1120" font-size="16.3" text-anchor="middle" >Stop</text>
<text x="1726" y="501.8" font-size="16.3" text-anchor="end"  textLength="111.3">Reverse Signal</text>
<text x="1722.6" y="550.6" font-size="16.3" text-anchor="end"  textLength="90.5">Turn Ground</text>
<text x="1723.4" y="573.6" font-size="16.3" text-anchor="end"  textLength="82.7">Turn Signal</text>
<text x="1724" y="621.8" font-size="16.3" text-anchor="end"  textLength="74.7">Tail Signal</text>
<text x="1726" y="684.6" font-size="16.3" text-anchor="end"  textLength="83.4">Stop Signal</text>
<text x="1733.5" y="949" font-size="16.3" text-anchor="end"  textLength="111.3">Reverse Signal</text>
<text x="1722.6" y="1000.3" font-size="16.3" text-anchor="end"  textLength="90.5">Turn Ground</text>
<text x="1723.4" y="1021.2" font-size="16.3" text-anchor="end"  textLength="82.7">Turn Signal</text>
<text x="1721.3" y="1077.5" font-size="16.3" text-anchor="end"  textLength="74.7">Tail Signal</text>
<text x="1724.5" y="1142.6" font-size="16.3" text-anchor="end"  textLength="83.4">Stop Signal</text>
<text x="1838.4" y="784.3" font-size="16.3" text-anchor="middle" >To</text>
<text x="1838.4" y="803.7" font-size="16.3" text-anchor="middle" >License</text>
<text x="1838.4" y="822.6" font-size="16.3" text-anchor="middle" >Plate</text>
</svg>
<div id="menubar" class="abs">
<span class="m" style="left:12px">File</span>
<span class="m" style="left:49px">Edit</span>
<span class="m" style="left:88px">View</span>
<span class="m" style="left:132px">Arrange</span>
<span class="m" style="left:193px">Extras</span>
<span class="m" style="left:247px">Help</span>
<div id="unsaved" class="abs">Unsaved changes. Click here to save.</div>
<svg class="abs" style="left:1887px;top:6px" width="20" height="20" viewBox="0 0 20 20"><g fill="none" stroke="#8a8a8a" stroke-width="1"><circle cx="9.5" cy="9.5" r="7.2"/><ellipse cx="9.5" cy="9.5" rx="3.2" ry="7.2"/><path d="M9.5 2.3V16.7M2.3 9.5H16.7M3.6 5.6H15.4M3.6 13.4H15.4"/></g></svg>
</div>
<div id="toolbar" class="abs"></div>
<div class="sep" style="left:54px"></div>
<div class="sep" style="left:133px"></div>
<div class="sep" style="left:206px"></div>
<div class="sep" style="left:279px"></div>
<div class="sep" style="left:322px"></div>
<div class="sep" style="left:395px"></div>
<div class="sep" style="left:498px"></div>
<div class="sep" style="left:599px"></div>
<svg class="abs" style="left:0;top:30px" width="1920" height="36" viewBox="0 30 1920 36">
<rect x="10.5" y="37.5" width="16" height="16" fill="#fff" stroke="#505050" stroke-width="1.2"/><path d="M10.5 41.5H26.5M20.5 41.5V53.5" stroke="#505050" stroke-width="1.2" fill="none"/><rect x="21" y="42" width="5" height="11" fill="#d0d0d0"/>
<path d="M33.5 44.6 h8 l-4 4.2 z" fill="#9a9a9a"/>
<text x="69.5" y="50.8" font-size="12.5" font-family="Liberation Sans,Arial,sans-serif" fill="#6a6a6a">135%</text>
<path d="M112 44.6 h8 l-4 4.2 z" fill="#9a9a9a"/>
<circle cx="154.5" cy="44.4" r="4.6" fill="none" stroke="#505050" stroke-width="1.6"/>
<path d="M157.8 48 l4.4 4.6" stroke="#505050" stroke-width="2.2" stroke-linecap="round"/>
<path d="M152 44.4 h5" stroke="#505050" stroke-width="1.2"/>
<path d="M154.5 41.9 v5" stroke="#505050" stroke-width="1.2"/>
<circle cx="184.5" cy="44.4" r="4.6" fill="none" stroke="#505050" stroke-width="1.6"/>
<path d="M187.8 48 l4.4 4.6" stroke="#505050" stroke-width="2.2" stroke-linecap="round"/>
<path d="M182 44.4 h5" stroke="#505050" stroke-width="1.2"/>
<path d="M222 47.6 l0 -6.2 l2.1 2 c3.6 -2.6 8.6 -2.2 11.2 2.6 c-3 -2.8 -6.6 -2.8 -9.2 -0.6 l2.2 2.2 z" fill="#505050"/>
<path d="M265.6 47.6 l0 -6.2 l-2.1 2 c-3.6 -2.6 -8.6 -2.2 -11.2 2.6 c3 -2.8 6.6 -2.8 9.2 -0.6 l-2.2 2.2 z" fill="#bdbdbd"/>
<path d="M296.2 39 h11.6 v1.6 h-11.6 z M299.8 37.6 h4.4 v1.4 h-4.4z M297.2 41.6 h9.6 v10.4 h-9.6 z" fill="#bdbdbd"/>
<path d="M338 45.500 V39 H344.500 M351.500 46.500 V53 H345" fill="none" stroke="#bdbdbd" stroke-width="1.2"/><rect x="340.500" y="41.500" width="8.500" height="8.500" fill="#bdbdbd"/>
<rect x="370" y="41" width="9" height="9" fill="#bdbdbd"/><rect x="367.5" y="38.5" width="7" height="7" fill="#f6f6f6" stroke="#bdbdbd"/><rect x="374.5" y="45.5" width="7" height="7" fill="#f6f6f6" stroke="#bdbdbd"/>
<path d="M411 44.5 l5.5 -5.5 l6 6 l-5.5 5.5 z" fill="#bdbdbd"/><path d="M411.5 38 l5 5" stroke="#bdbdbd" stroke-width="1"/><path d="M424 47.5 q1.8 2.6 0 3.6 q-1.8 -1 0 -3.6z" fill="#bdbdbd"/>
<path d="M441.5 49 l1 -3.6 l8.2 -8.2 l2.6 2.6 l-8.2 8.2 z" fill="#bdbdbd"/><rect x="437" y="52" width="21" height="2.6" fill="#bdbdbd"/>
<rect x="474" y="42.5" width="12" height="10" fill="#d6d6d6"/><rect x="471.5" y="40.5" width="12" height="10" fill="#f6f6f6" stroke="#bdbdbd" stroke-width="1.4"/>
<path d="M512.5 45.5 H526" stroke="#505050" stroke-width="1.3"/><path d="M528.5 45.5 l-4.6 -2.9 l1.2 2.9 l-1.2 2.9 z" fill="#505050"/>
<path d="M534 44.6 h8 l-4 4.2 z" fill="#9a9a9a"/>
<path d="M558.5 51.5 V46 H570.5 V41.5" stroke="#505050" stroke-width="1.4" fill="none"/><rect x="557.2" y="51" width="2.8" height="2.8" fill="#fff" stroke="#505050" stroke-width="1"/><rect x="569.2" y="38.8" width="2.8" height="2.8" fill="#fff" stroke="#505050" stroke-width="1"/>
<path d="M578 44.6 h8 l-4 4.2 z" fill="#9a9a9a"/>
<path d="M614 45.2 H627 M620.5 38.7 V51.7" stroke="#3c3c3c" stroke-width="2.6"/>
<path d="M635 44.6 h8 l-4 4.2 z" fill="#9a9a9a"/>
<g fill="none" stroke="#505050" stroke-width="1.6"><path d="M1859 44.5 v-2.5 h2.5 M1866.5 42 h2.5 v2.5 M1869 50.5 v2.5 h-2.5 M1861.500 53 h-2.5 v-2.5"/></g><rect x="1862" y="45.500" width="4" height="4" fill="#505050"/>
<rect x="1876.500" y="42.500" width="9" height="10" fill="#fff" stroke="#505050" stroke-width="1.1"/><path d="M1882.500 42.500 v10" stroke="#505050" stroke-width="1.1"/>
<path d="M1892.500 42.500 l4.500 4 l4.500 -4 M1892.500 47.500 l4.500 4 l4.500 -4" fill="none" stroke="#505050" stroke-width="1.5"/>
</svg>
<div id="leftbar" class="abs"></div>
<div class="abs" style="left:0;top:65px;width:13px;height:1095px;background:#fafafa"></div>
<div class="abs" style="left:13px;top:65px;width:10px;height:1095px;background:#f3f3f3"></div>
<div class="abs" style="left:15px;top:68px;width:6px;height:357px;background:#c4c4c4;border-radius:3px"></div>
<div class="abs" style="left:9px;top:81px;width:5px;height:27px;background:#fff;border:1px solid #dadada;border-right:none;border-radius:3px 0 0 3px;box-sizing:border-box"></div>
<div class="abs" style="left:0;top:129px;width:12px;height:30px;background:#eeeeee"></div>
<div class="abs" style="left:0;top:251px;width:12px;height:30px;background:#eeeeee"></div>
<svg class="abs" style="left:0;top:65px" width="37" height="1103" viewBox="0 65 37 1103">
<path d="M2.500 141.500 h7 l-3.500 4 z M2.500 264 h7 l-3.500 4 z" fill="#909090"/>
<path d="M9.500 170 V234" stroke="#cfcfcf" stroke-width="2.500" stroke-dasharray="2.500 2.500"/>
<path d="M11.500 299 V317 M11.500 345 V360 M11.500 511 V544 M11.500 608 V625 M11.500 914 V931 M11.500 952 V984 M11.500 1002 V1018 M11.500 1136 V1152" stroke="#111" stroke-width="1.2"/>
<path d="M11.500 483 v1.500 M11.500 570 v2 M11.500 659 v1.500 M11.500 710 v1.500 M11.500 748 v1.500 M11.500 1046 v1.500 M11.500 1065 v1.500 M11.500 1107 v1.500" stroke="#666" stroke-width="1.200"/>
<path d="M29.500 630 v6 M32 630 v6" stroke="#555" stroke-width="1"/>
</svg>
<div class="abs" style="left:12px;top:1152px;width:12px;height:9px;background:#fff"></div>
<div id="rightbar" class="abs"></div>
<div class="abs" style="left:1908px;top:65px;width:12px;height:1093px;background:#f1f1f1"></div>
<div class="abs" style="left:1911px;top:435px;width:6px;height:357px;background:#c4c4c4;border-radius:3px"></div>
<div id="hscroll" class="abs"></div>
<div class="abs" style="left:670px;top:1160px;width:620px;height:6px;background:#c4c4c4;border-radius:3px"></div>
<div class="abs" style="left:1891px;top:1150px;width:29px;height:18px;background:#f3f3f3"></div>
<div id="footer" class="abs"></div>
<div class="abs" style="left:0;top:1168px;width:37px;height:32px;background:#eaeaea"></div>
<div class="abs" style="left:13px;top:1175px;font-size:10.5px;color:#555;line-height:13px">M</div>
<div class="abs" style="left:37px;top:1170px;width:29px;height:30px;background:#dcdcdc;border:1px solid #c6c6c6;box-sizing:border-box"></div>
<svg class="abs" style="left:37px;top:1170px" width="29" height="30"><circle cx="14.500" cy="10" r="1.300" fill="#777"/><circle cx="14.500" cy="15.5" r="1.300" fill="#777"/><circle cx="14.500" cy="20.8" r="1.300" fill="#777"/></svg>
<div class="abs" style="left:66px;top:1170px;width:139px;height:30px;background:#efefef;border-top:1px solid #d9d9d9;box-sizing:border-box"></div>
<div class="abs" style="left:70px;top:1178px;font-size:12px;font-weight:bold;color:#888;line-height:14px">Page-1</div>
<div class="abs" style="left:205px;top:1170px;width:29px;height:30px;background:#e6e6e6;border:1px solid #c6c6c6;box-sizing:border-box"></div>
<svg class="abs" style="left:205px;top:1170px" width="29" height="30"><path d="M8.500 15.500 h12 M14.500 9.500 v12" stroke="#6e6e6e" stroke-width="2.400"/></svg>
<div class="abs" style="left:1282px;top:1178px;width:638px;height:22px;background:#f4f4f4;border-top:1px solid #cfcfcf;border-left:1px solid #cfcfcf;border-radius:3px 0 0 0;box-sizing:border-box;font-family:'DejaVu Sans','Liberation Sans',sans-serif;font-size:12.8px;color:#555;line-height:19px;padding-left:3px">javascript:void(0);</div>
</body></html>
